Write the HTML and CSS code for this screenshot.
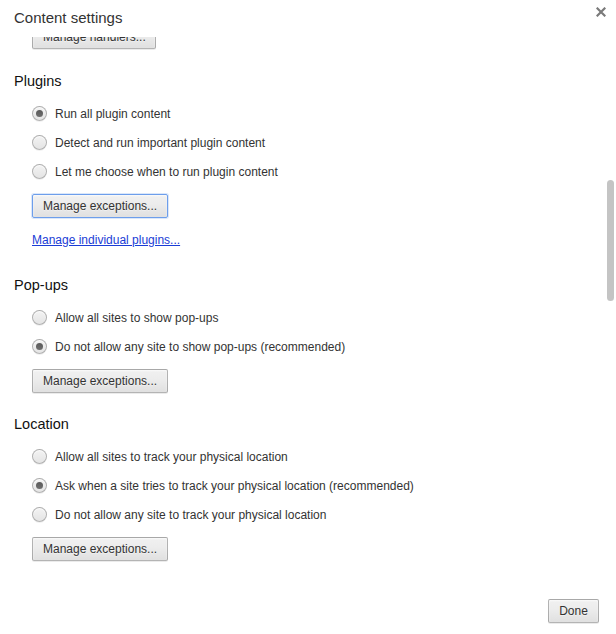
FILE: index.html
```html
<!DOCTYPE html>
<html>
<head>
<meta charset="utf-8">
<link rel="stylesheet" href="styles.css">
</head>
<body>
<div class="dialog">
  <div class="header">
    <h1 class="title">Content settings</h1>
    <button class="close" aria-label="Close">
      <svg width="10" height="10" viewBox="0 0 10 10"><path d="M1.5 1.5 L8.5 8.5 M8.5 1.5 L1.5 8.5" stroke="#7a7a7a" stroke-width="2.2" stroke-linecap="square"/></svg>
    </button>
  </div>
  <div class="content">
    <div class="inner">
      <div class="indent first"><button class="btn">Manage handlers...</button></div>

      <section class="section">
        <h3 class="heading">Plugins</h3>
        <div class="indent">
          <label class="radio-row"><span class="radio checked"></span><span>Run all plugin content</span></label>
          <label class="radio-row"><span class="radio"></span><span>Detect and run important plugin content</span></label>
          <label class="radio-row"><span class="radio"></span><span>Let me choose when to run plugin content</span></label>
          <div class="btn-row"><button class="btn focused">Manage exceptions...</button></div>
          <div class="link-row"><a class="link" href="#">Manage individual plugins...</a></div>
        </div>
      </section>

      <section class="section popups">
        <h3 class="heading">Pop-ups</h3>
        <div class="indent">
          <label class="radio-row"><span class="radio"></span><span>Allow all sites to show pop-ups</span></label>
          <label class="radio-row"><span class="radio checked"></span><span>Do not allow any site to show pop-ups (recommended)</span></label>
          <div class="btn-row"><button class="btn">Manage exceptions...</button></div>
        </div>
      </section>

      <section class="section location">
        <h3 class="heading">Location</h3>
        <div class="indent">
          <label class="radio-row"><span class="radio"></span><span>Allow all sites to track your physical location</span></label>
          <label class="radio-row"><span class="radio checked"></span><span>Ask when a site tries to track your physical location (recommended)</span></label>
          <label class="radio-row"><span class="radio"></span><span>Do not allow any site to track your physical location</span></label>
          <div class="btn-row"><button class="btn">Manage exceptions...</button></div>
        </div>
      </section>
    </div>
    <div class="scrollbar"></div>
  </div>
  <div class="footer">
    <button class="btn done">Done</button>
  </div>
</div>
</body>
</html>
```
FILE: styles.css
```css
html, body {
  margin: 0;
  padding: 0;
  background: #fff;
}
body {
  font-family: "Liberation Sans", Arial, Helvetica, sans-serif;
  font-size: 12px;
  color: #333;
}
.dialog {
  width: 616px;
  height: 634px;
  display: flex;
  flex-direction: column;
  overflow: hidden;
}
.header {
  height: 37px;
  flex: 0 0 37px;
  display: flex;
  align-items: flex-start;
  justify-content: space-between;
  padding-left: 14px;
  padding-right: 9px;
}
.title {
  margin: 0;
  padding-top: 8px;
  font-size: 15px;
  font-weight: normal;
  line-height: 20px;
  color: #333;
}
.close {
  margin-top: 6px;
  padding: 0;
  width: 12px;
  height: 12px;
  border: 0;
  background: transparent;
  display: flex;
  align-items: center;
  justify-content: center;
}
.content {
  flex: 1 1 auto;
  position: relative;
  overflow: hidden;
}
.inner {
  margin-top: -12px;
}
.indent {
  padding-left: 32px;
}
.first {
  height: 24px;
}
.section {
  margin-top: 22px;
}
.section.location {
  margin-top: 21px;
}
.section.popups {
  margin-top: 25px;
}
.heading {
  margin: 0 0 8px 14px;
  font-size: 14.5px;
  line-height: 20px;
  font-weight: normal;
  color: #111;
}
.radio-row {
  display: flex;
  align-items: center;
  height: 29px;
  gap: 8px;
  color: #333;
}
.radio {
  box-sizing: border-box;
  width: 15px;
  height: 15px;
  border-radius: 50%;
  border: 1px solid rgba(0, 0, 0, 0.25);
  background: linear-gradient(#f3f3f3, #e4e4e4);
  box-shadow: 0 1px 0 rgba(0, 0, 0, 0.06), inset 0 1px 1px rgba(255, 255, 255, 0.8);
  display: flex;
  align-items: center;
  justify-content: center;
}
.radio.checked::after {
  content: "";
  width: 7px;
  height: 7px;
  border-radius: 50%;
  background: linear-gradient(#5a5a5a, #6e6e6e);
}
.btn-row {
  margin-top: 8px;
  height: 24px;
}
.btn {
  box-sizing: border-box;
  height: 24px;
  padding: 0 10px;
  font-family: "Liberation Sans", Arial, Helvetica, sans-serif;
  font-size: 12px;
  color: #333;
  white-space: nowrap;
  overflow: hidden;
  background: linear-gradient(#f0f0f0, #ededed 38%, #e0e0e0);
  border: 1px solid rgba(0, 0, 0, 0.25);
  border-radius: 2px;
  box-shadow: 0 1px 0 rgba(0, 0, 0, 0.08), inset 0 1px 2px rgba(255, 255, 255, 0.75);
  text-shadow: 0 1px 0 #f0f0f0;
  line-height: 22px;
}
.first .btn {
  width: 124px;
}
.btn.focused {
  border-color: #6d9eeb;
  box-shadow: 0 0 0 1px rgba(109, 158, 235, 0.25), inset 0 1px 2px rgba(255, 255, 255, 0.75);
}
.link-row {
  margin-top: 12px;
  height: 20px;
  line-height: 20px;
}
.link {
  color: #1a3cd6;
  text-decoration: underline;
}
.scrollbar {
  position: absolute;
  right: 2px;
  top: 143px;
  width: 7px;
  height: 121px;
  border-radius: 4px;
  background: #c4c4c4;
}
.footer {
  flex: 0 0 auto;
  display: flex;
  justify-content: flex-end;
  padding: 12px 17px 11px 0;
}
.done {
  width: 51px;
  padding: 0;
}
```
